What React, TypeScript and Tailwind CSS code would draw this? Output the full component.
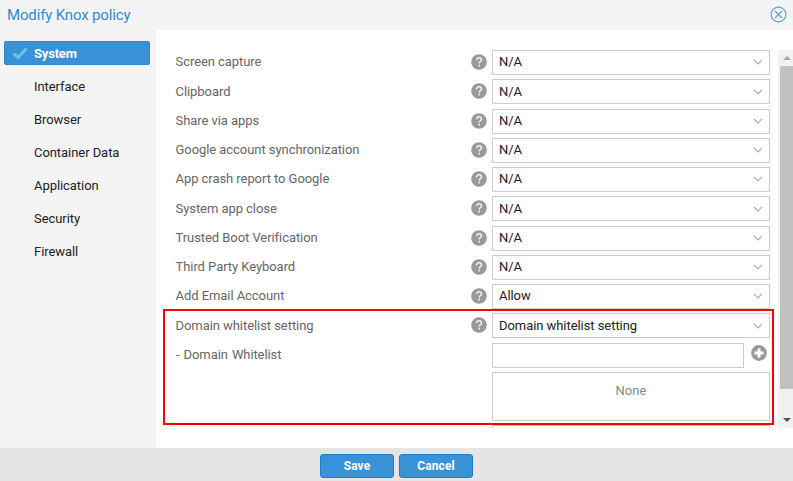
import React from "react";

const menu = ["System", "Interface", "Browser", "Container Data", "Application", "Security", "Firewall"];

const settings = [
  { label: "Screen capture", value: "N/A" },
  { label: "Clipboard", value: "N/A" },
  { label: "Share via apps", value: "N/A" },
  { label: "Google account synchronization", value: "N/A" },
  { label: "App crash report to Google", value: "N/A" },
  { label: "System app close", value: "N/A" },
  { label: "Trusted Boot Verification", value: "N/A" },
  { label: "Third Party Keyboard", value: "N/A" },
  { label: "Add Email Account", value: "Allow" },
  { label: "Domain whitelist setting", value: "Domain whitelist setting" },
];

function HelpIcon() {
  return (
    <svg width="16" height="16" viewBox="0 0 16 16" className="shrink-0">
      <circle cx="8" cy="8" r="7.8" fill="#999" />
      <path d="M5.6 6.2C5.6 4.7 6.6 3.8 8 3.8s2.5.9 2.5 2.2c0 1.6-2.3 1.7-2.3 3.4" fill="none" stroke="#f4f4f4" strokeWidth="1.5" />
      <rect x="7.3" y="10.7" width="1.7" height="1.7" fill="#f4f4f4" />
    </svg>
  );
}

function Select({ value }: { value: string }) {
  return (
    <div className="flex h-[25px] w-[278px] items-center justify-between border border-[#ccc] bg-white pr-[6px] pb-[0.4px] pl-[6px] text-[#222]">
      <span>{value}</span>
      <svg width="10" height="6" viewBox="0 0 10 6" fill="none" stroke="#aaa" strokeWidth="1.2">
        <path d="M1 .8L5 4.8L9 .8" />
      </svg>
    </div>
  );
}

export default function App() {
  return (
    <div className="flex h-[481px] w-[793px] flex-col overflow-hidden bg-[#f4f4f4] font-['Roboto',sans-serif] text-[13px] leading-[16px] tracking-[-0.06px]">
      <header className="flex h-[30px] shrink-0 items-center justify-between pr-[6px] pl-[7px]">
        <h1 className="text-[15px] tracking-[-0.15px] text-[#2f8bd0]">Modify Knox policy</h1>
        <svg width="17" height="17" viewBox="0 0 17 17" fill="none" stroke="#5b9fd6" strokeWidth="1.1" className="mb-px">
          <circle cx="8.5" cy="8.5" r="7.4" />
          <path d="M5 5L12 12M12 5L5 12" />
        </svg>
      </header>

      <div className="flex h-[418px] shrink-0">
        <nav className="w-[156px] shrink-0 pt-[11px] pl-1">
          {menu.map((item, i) => (
            <div
              key={item}
              className={
                i === 0
                  ? "mb-[9.7px] flex h-6 w-[146px] items-center rounded-[2px] border border-[#2f87cf] bg-[#3a92d6] pt-px pl-[7px] font-bold tracking-[-0.2px] text-white"
                  : "mb-[9.1px] flex h-6 w-[146px] items-center pl-[30px] text-[#222]"
              }
            >
              {i === 0 && (
                <svg width="16" height="13" viewBox="0 0 16 13" className="mr-[6px] mb-px">
                  <path d="M1.5 6.5L6 10.7L14.5 1.5" fill="none" stroke="#68c5ea" strokeWidth="3" />
                </svg>
              )}
              {item}
            </div>
          ))}
        </nav>

        <main className="relative flex flex-1 bg-white pt-5 pb-5">
          <div className="h-[378px] w-[622px] overflow-hidden pl-[19.5px] text-[#666]">
            {settings.map((s) => (
              <div key={s.label} className="mb-[4.25px] flex h-[25px] items-center">
                <span className="w-[295.5px] pb-[0.4px]">{s.label}</span>
                <div className="pb-px">
                  <HelpIcon />
                </div>
                <div className="ml-[5px]">
                  <Select value={s.value} />
                </div>
              </div>
            ))}
            <div className="flex h-[25px] items-center">
              <span className="w-[316.5px] pl-[0.5px] tracking-[-0.1px] [word-spacing:1px]">- Domain Whitelist</span>
              <div className="h-[25px] w-[252px] border border-[#ccc]" />
              <svg width="16" height="16" viewBox="0 0 16 16" className="mb-[4px] ml-[7px]">
                <circle cx="8" cy="8" r="7.9" fill="#999" />
                <path d="M8 3.5V12.5M3.5 8H12.5" stroke="#fff" strokeWidth="3" />
              </svg>
            </div>
            <div className="mt-[4.5px] ml-[316.5px] h-[49px] w-[278px] border border-[#ccc] pt-[10px] text-center tracking-[0.1px] text-[#888]">
              None
            </div>
            <div className="mt-[4px] ml-[316.5px] h-[25px] w-[278px] border border-[#ccc]" />
          </div>

          <div className="flex h-[378px] w-[15px] flex-col items-center bg-[#f1f1f1] pl-[2px]">
            <div className="flex h-4 items-center">
              <svg width="8" height="4" viewBox="0 0 8 4"><path d="M0 4L4 0L8 4Z" fill="#a3a3a3" /></svg>
            </div>
            <div className="h-[323px] w-full bg-[#c1c1c1]" />
            <div className="flex flex-1 items-center pt-[22px]">
              <svg width="8" height="4" viewBox="0 0 8 4"><path d="M0 0L4 4L8 0Z" fill="#505050" /></svg>
            </div>
          </div>

          <div className="absolute top-[279px] left-[7px] h-[116px] w-[611px] border-2 border-[#ff0000]" />
        </main>
      </div>

      <footer className="flex h-[33px] shrink-0 items-center justify-center gap-[5px] bg-[#e5e5e5] pt-[2px] font-bold text-white">
        <button className="h-6 w-[74px] rounded-[3px] border border-[#1b7fcc] bg-[#3a92d6] text-[12px] tracking-[0.1px]">Save</button>
        <button className="h-6 w-[74px] rounded-[3px] border border-[#1b7fcc] bg-[#3a92d6] text-[12px] tracking-[0.1px]">Cancel</button>
      </footer>
    </div>
  );
}
